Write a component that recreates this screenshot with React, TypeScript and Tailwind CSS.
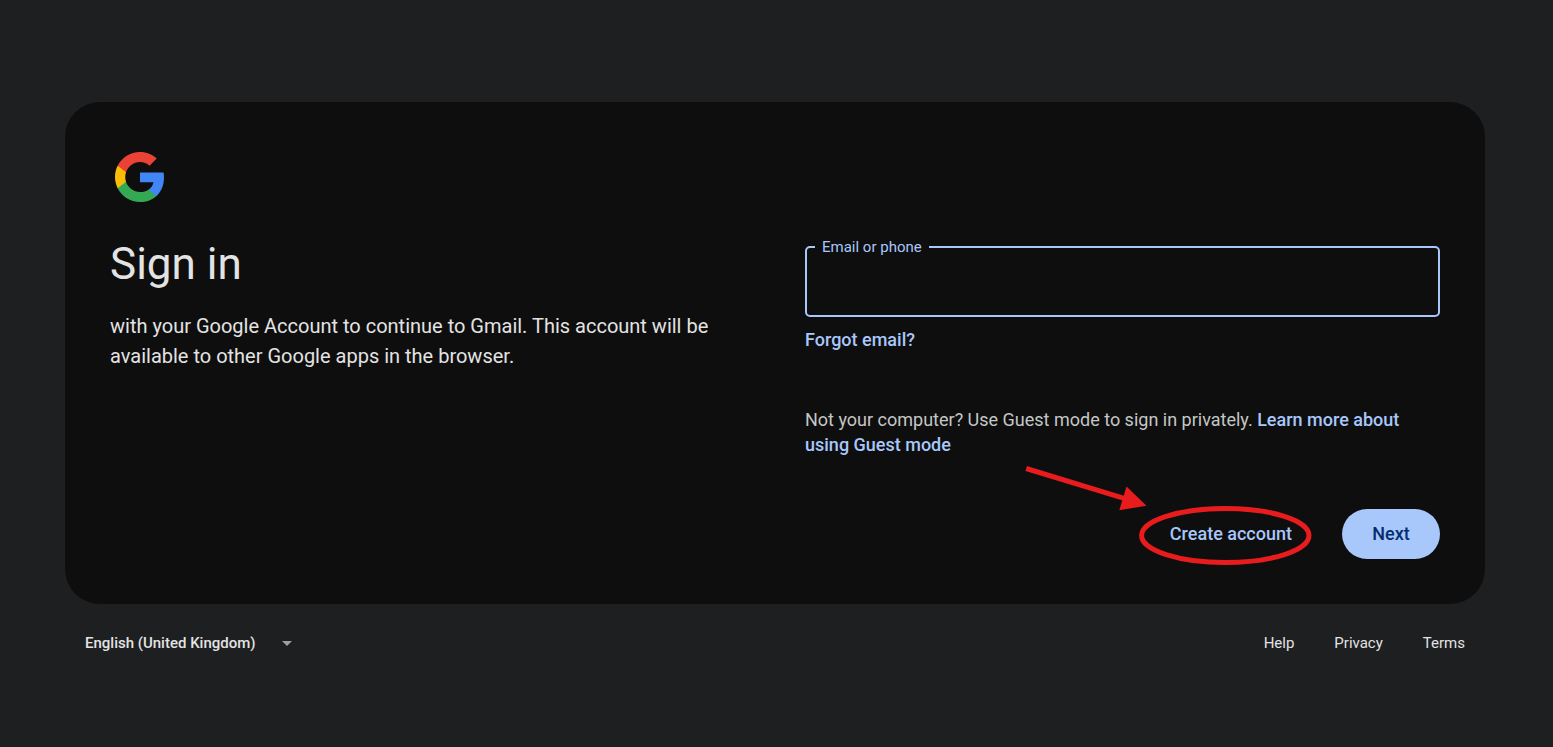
import { ChangeEvent, useState } from "react";

function GoogleMark() {
  return (
    <svg viewBox="2 2 44 44" className="size-[50px]" role="img" aria-label="Google">
      <path fill="#4285F4" d="M45.12 24.5c0-1.56-.14-3.06-.4-4.5H24v8.51h11.84c-.51 2.75-2.06 5.08-4.39 6.64v5.52h7.11c4.16-3.83 6.56-9.47 6.56-16.17z" />
      <path fill="#34A853" d="M24 46c5.94 0 10.92-1.97 14.56-5.33l-7.11-5.52c-1.97 1.32-4.49 2.1-7.45 2.1-5.73 0-10.58-3.87-12.31-9.07H4.34v5.7C7.96 41.07 15.4 46 24 46z" />
      <path fill="#FBBC05" d="M11.69 28.18C11.25 26.86 11 25.45 11 24s.25-2.86.69-4.18v-5.7H4.34C2.85 17.09 2 20.45 2 24c0 3.55.85 6.91 2.34 9.88l7.35-5.7z" />
      <path fill="#EA4335" d="M24 10.75c3.23 0 6.13 1.11 8.41 3.29l6.31-6.31C34.91 4.18 29.93 2 24 2 15.4 2 7.96 6.93 4.34 14.12l7.35 5.7c1.73-5.2 6.58-9.07 12.31-9.07z" />
    </svg>
  );
}

/* Red arrow and ring that point out the create-account button. */
function Callout() {
  return (
    <svg
      viewBox="0 0 300 110"
      className="pointer-events-none absolute -right-2 -bottom-3 h-[110px] w-[300px]"
      fill="none"
      aria-hidden="true"
    >
      <ellipse cx="205.3" cy="74.5" rx="83.7" ry="27" stroke="#e81c1c" strokeWidth="5" />
      <path d="M6.2 7.5 105 37.6" stroke="#e81c1c" strokeWidth="5" />
      <path d="M106.5 25.5 126.5 44.8 99.3 49.2Z" fill="#e81c1c" />
    </svg>
  );
}

const footerLinks = ["Help", "Privacy", "Terms"];

export default function App() {
  const [email, setEmail] = useState("");

  return (
    <div className="min-h-screen bg-[#1e1f20] pt-[102px] pr-[68px] pb-10 pl-[65px] font-['Google_Sans','Roboto',sans-serif] text-[#e3e3e3]">
      <main className="rounded-[35px] bg-[#0e0e0e] p-[45px]">
        <div className="p-[5px]">
          <GoogleMark />
        </div>
        <div className="mt-[31px] grid grid-cols-2 gap-[60px]">
          <div>
            <h1 className="text-[44px] leading-[53px]">Sign in</h1>
            <p className="mt-5 text-xl leading-[30px]">
              with your Google Account to continue to Gmail. This account will be available to other
              Google apps in the browser.
            </p>
          </div>

          <form onSubmit={(e) => e.preventDefault()}>
            <fieldset className="rounded-[5px] border-2 border-[#a8c7fa]">
              <legend className="ml-2 px-[7px] text-[15px] leading-[18px] text-[#a8c7fa]">
                <label htmlFor="identifier">Email or phone</label>
              </legend>
              <input
                id="identifier"
                type="text"
                value={email}
                onChange={(e: ChangeEvent<HTMLInputElement>) => setEmail(e.target.value)}
                className="block h-[59px] w-full bg-transparent px-4 text-xl outline-none"
              />
            </fieldset>
            <a href="#forgot" className="mt-[10px] block w-fit text-lg leading-[25px] font-medium text-[#a8c7fa]">
              Forgot email?
            </a>
            <p className="mt-[55px] text-lg leading-[25px] text-[#c4c7c5]">
              Not your computer? Use Guest mode to sign in privately.{" "}
              <a href="#guest" className="font-medium text-[#a8c7fa]">
                Learn more about using Guest mode
              </a>
            </p>
            <div className="mt-[52px] flex justify-end gap-[30px]">
              <div className="relative">
                <button type="button" className="h-[50px] px-5 text-lg font-medium text-[#a8c7fa]">
                  Create account
                </button>
                <Callout />
              </div>
              <button type="submit" className="h-[50px] min-w-[98px] rounded-full bg-[#a8c7fa] px-5 text-lg font-medium text-[#062e6f]">
                Next
              </button>
            </div>
          </form>
        </div>
      </main>

      <footer className="mt-6 flex items-center justify-between px-5 text-[15px] leading-[30px]">
        <div className="relative">
          <select aria-label="Language" className="w-[210px] appearance-none bg-transparent pr-8 font-medium outline-none">
            <option>English (United Kingdom)</option>
          </select>
          <svg viewBox="0 0 10 5" className="pointer-events-none absolute top-[13px] right-[3px] h-[5px] w-2.5" aria-hidden="true">
            <path d="M0 0h10L5 5z" fill="#9aa0a6" />
          </svg>
        </div>
        <nav className="flex gap-10">
          {footerLinks.map((name) => (
            <a key={name} href={`#${name.toLowerCase()}`}>
              {name}
            </a>
          ))}
        </nav>
      </footer>
    </div>
  );
}
